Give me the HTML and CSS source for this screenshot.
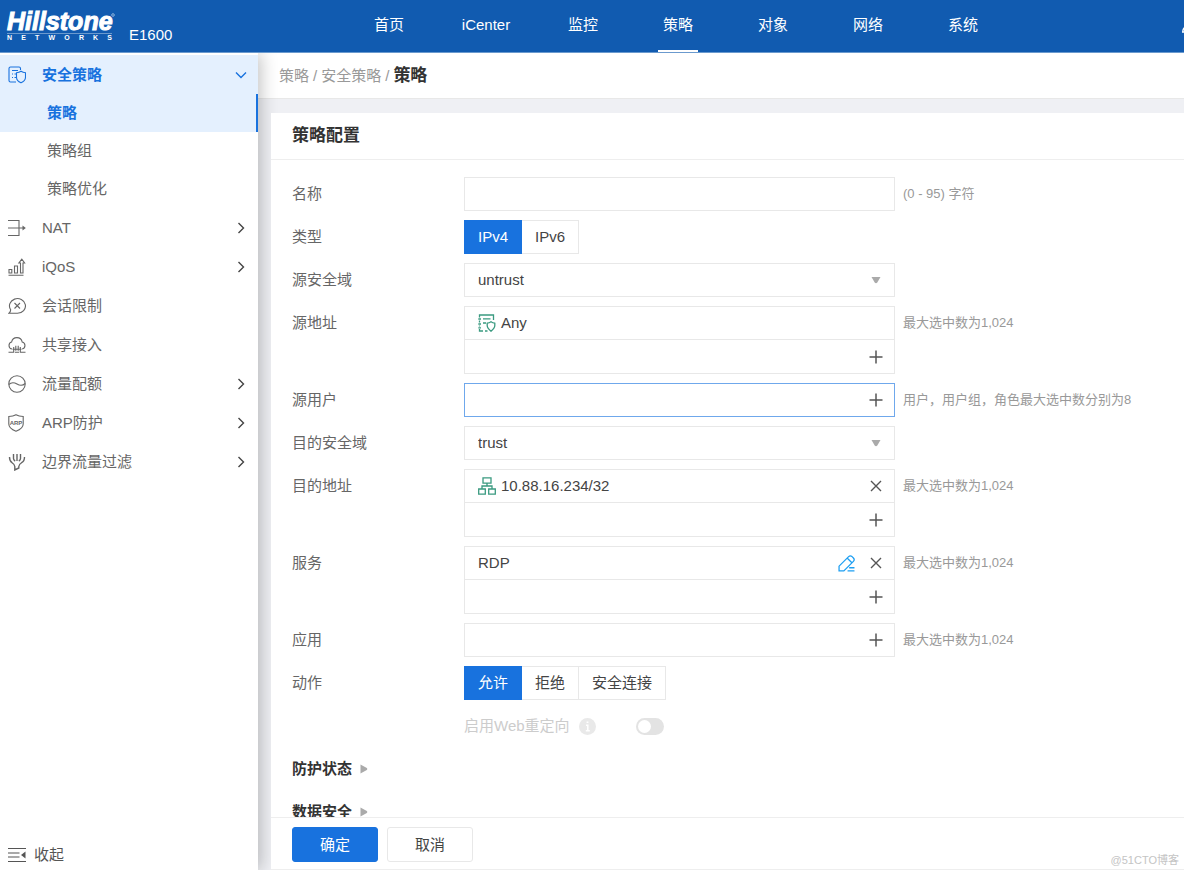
FILE: index.html
```html
<!DOCTYPE html>
<html lang="zh-CN">
<head>
<meta charset="utf-8">
<meta name="viewport" content="width=device-width, initial-scale=1">
<title>策略配置</title>
<link rel="stylesheet" href="styles.css">
</head>
<body>
<svg class="sprite" aria-hidden="true">
  <symbol id="i-plus" viewBox="0 0 14 14"><path d="M7 .5v13M.5 7h13" fill="none" stroke="currentColor" stroke-width="1.5"/></symbol>
  <symbol id="i-close" viewBox="0 0 14 14"><path d="M2 2l10 10M12 2L2 12" fill="none" stroke="currentColor" stroke-width="1.4"/></symbol>
  <symbol id="i-right" viewBox="0 0 12 12"><path d="M3.500 1l5 5-5 5" fill="none" stroke="currentColor" stroke-width="1.4"/></symbol>
  <symbol id="i-down" viewBox="0 0 12 12"><path d="M1 3.500l5 5 5-5" fill="none" stroke="currentColor" stroke-width="1.4"/></symbol>
</svg>
<header class="topbar">
  <div class="brand">
    <div class="logo">
      <span class="logo-name">Hillstone</span>
      <span class="logo-sub">N E T W O R K S</span>
      <svg class="logo-reg" viewBox="0 0 4 4" aria-hidden="true"><circle cx="2" cy="2" r="1.300" fill="none" stroke="#a9c5e6" stroke-width=".8"/></svg>
    </div>
    <span class="model">E1600</span>
  </div>
  <nav class="nav">
    <a href="#">首页</a>
    <a href="#" class="wide">iCenter</a>
    <a href="#">监控</a>
    <a href="#" class="current">策略</a>
    <a href="#">对象</a>
    <a href="#">网络</a>
    <a href="#">系统</a>
  </nav>
  <svg class="user" viewBox="0 0 16 16" aria-hidden="true"><circle cx="8" cy="4" r="3.500" fill="none" stroke="#fff" stroke-width="1.400"/><path d="M.7 14c.2-4 3-6 7.300-6s7 2 7.300 6z" fill="none" stroke="#fff" stroke-width="1.400"/></svg>
</header>

<div class="layout">
  <aside class="sidebar">
    <nav class="menu">
      <a href="#" class="item open">
        <svg class="ico" viewBox="0 0 18 18"><path d="M8 16H2.500Q1 16 1 14.500V2.500Q1 1 2.500 1h8.500Q12.500 1 12.500 2.500V4M4 4.500h6M4 8h1M6.500 8h1.500M4 11.500h1M6.500 11.500h1.500"/><path d="M13 5.200c1.500 1 3 1.400 4.500 1.500v4.500c0 2.500-1.500 4.300-4.500 5.600-3-1.300-4.500-3.100-4.500-5.600V6.700c1.500-.1 3-.5 4.500-1.500z"/></svg>
        <span>安全策略</span><svg class="arrow"><use href="#i-down"/></svg>
      </a>
      <a href="#" class="sub current">策略</a>
      <a href="#" class="sub">策略组</a>
      <a href="#" class="sub">策略优化</a>
      <a href="#" class="item">
        <svg class="ico" viewBox="0 0 18 18"><path d="M0 1.500h11v15H0M0 9h16"/><path d="M14.500 6.500L17.800 9l-3.300 2.500z" fill="currentColor" stroke="none"/></svg>
        <span>NAT</span><svg class="arrow"><use href="#i-right"/></svg>
      </a>
      <a href="#" class="item">
        <svg class="ico" viewBox="0 0 18 18"><path d="M.5 17.300h15M1 15v-3.500h2.800V15zM6.500 15V8h3v7zM12.500 15V5h-1.600l2.900-3.800L16.600 5H15v10z"/></svg>
        <span>iQoS</span><svg class="arrow"><use href="#i-right"/></svg>
      </a>
      <a href="#" class="item">
        <svg class="ico" viewBox="0 0 18 18"><path d="M1 16.200h8.500a8 7.300 0 1 0-6.800-3.400c0 1.600-.6 2.500-1.700 3.400zM6.500 6l5.500 5.500M12 6l-5.500 5.500"/></svg>
        <span>会话限制</span>
      </a>
      <a href="#" class="item">
        <svg class="ico" viewBox="0 0 18 18"><path d="M4 13a3.600 3.600 0 0 1-.4-7 5.400 5.400 0 0 1 10.600 0 3.600 3.600 0 0 1 0 7M.5 16.300h5.200V11M7.800 9.800v5M10.200 9.800v5M12.300 11v5.300h5.200M4.500 13.300h9M7 16.300h4"/></svg>
        <span>共享接入</span>
      </a>
      <a href="#" class="item">
        <svg class="ico" viewBox="0 0 18 18"><circle cx="9" cy="9" r="8.200"/><path d="M.8 9.500C4 6.500 6.500 7.500 9 9s5 2.500 8.200-.5"/></svg>
        <span>流量配额</span><svg class="arrow"><use href="#i-right"/></svg>
      </a>
      <a href="#" class="item">
        <svg class="ico" viewBox="0 0 18 18"><path d="M8 .8c2 1.200 4.500 1.700 7.200 1.700V10c0 3-2.500 5.400-7.200 7.200C3.300 15.400.8 13 .8 10V2.500C3.500 2.500 6 2 8 .8z"/><text class="arp" x="8" y="11" text-anchor="middle">ARP</text></svg>
        <span>ARP防护</span><svg class="arrow"><use href="#i-right"/></svg>
      </a>
      <a href="#" class="item">
        <svg class="ico heavy" viewBox="0 0 18 18"><path d="M5.500 1v4.500Q5.500 7.200 7.200 8M9 1v7M12.500 1v4.500Q12.500 7.200 10.800 8M1.500 4C1.500 7.500 2 8.500 4 9.700 6 11 6.800 11.500 6.800 13.500V17l4-2V13.500c0-2 .8-2.500 2.800-3.800C16 8.500 16.500 7.500 16.500 4"/></svg>
        <span>边界流量过滤</span><svg class="arrow"><use href="#i-right"/></svg>
      </a>
    </nav>
    <button class="collapse" type="button">
      <svg class="ico" viewBox="0 0 18 18"><path d="M0 2.500h18M0 7h11.500M0 11h11.500M0 15.500h18"/><path d="M17.500 5.500v7L13 9z" fill="currentColor" stroke="none"/></svg>
      <span>收起</span>
    </button>
  </aside>

  <main class="main">
    <div class="crumbs"><a href="#">策略</a><span>/</span><a href="#">安全策略</a><span>/</span><strong>策略</strong></div>
    <section class="panel">
      <h1 class="panel-title">策略配置</h1>
      <form class="form" id="policy">
        <div class="row">
          <label for="name">名称</label>
          <input class="field" id="name" type="text">
          <span class="hint">(0 - 95) 字符</span>
        </div>
        <div class="row">
          <span class="label">类型</span>
          <div class="segment"><button type="button" class="on" aria-pressed="true">IPv4</button><button type="button">IPv6</button></div>
        </div>
        <div class="row">
          <label for="src-zone">源安全域</label>
          <div class="pick"><select class="field" id="src-zone"><option>untrust</option></select><svg viewBox="0 0 10 8"><path d="M.5 1h9L6.300 6.500Q5 8 3.700 6.500z"/></svg></div>
        </div>
        <div class="row">
          <span class="label">源地址</span>
          <div class="box">
            <div class="line">
              <svg class="green" viewBox="0 0 18 18"><path d="M1.500 3.500V1h14v5M1.500 6.500v2M1.500 11.500v1M1.500 15v2H5M7 17h2.500M.3 5h2.700M.3 10h2.700M.3 13.800h2.700M5 4.800h7.500M5 9h3"/><path d="M13 17.200c-2.500-2-3.800-3.800-3.800-5.700V9.200C10.700 9 11.900 8.500 13 7.700c1.100.8 2.300 1.300 3.800 1.500v2.300c0 1.900-1.300 3.700-3.800 5.700z"/></svg>
              <span>Any</span>
            </div>
            <div class="line"><button type="button" class="act" aria-label="添加源地址"><svg><use href="#i-plus"/></svg></button></div>
          </div>
          <span class="hint">最大选中数为1,024</span>
        </div>
        <div class="row">
          <span class="label">源用户</span>
          <div class="box active"><div class="line"><button type="button" class="act" aria-label="添加源用户"><svg><use href="#i-plus"/></svg></button></div></div>
          <span class="hint">用户，用户组，角色最大选中数分别为8</span>
        </div>
        <div class="row">
          <label for="dst-zone">目的安全域</label>
          <div class="pick"><select class="field" id="dst-zone"><option>trust</option></select><svg viewBox="0 0 10 8"><path d="M.5 1h9L6.300 6.500Q5 8 3.700 6.500z"/></svg></div>
        </div>
        <div class="row">
          <span class="label">目的地址</span>
          <div class="box">
            <div class="line">
              <svg class="green" viewBox="0 0 18 18"><path d="M5 .8h8v5.400H5zM.7 12h6.600v5.200H.7zM10.700 12h6.600v5.200h-6.600zM9 6.200V9M4 12V9h10v3"/></svg>
              <span>10.88.16.234/32</span>
              <button type="button" class="act" aria-label="删除"><svg><use href="#i-close"/></svg></button>
            </div>
            <div class="line"><button type="button" class="act" aria-label="添加目的地址"><svg><use href="#i-plus"/></svg></button></div>
          </div>
          <span class="hint">最大选中数为1,024</span>
        </div>
        <div class="row">
          <span class="label">服务</span>
          <div class="box">
            <div class="line">
              <span>RDP</span>
              <button type="button" class="act edit" aria-label="编辑"><svg viewBox="0 0 16 16"><path d="M1 15V10.500L10 1.500Q11.500 0 13.200 1.500L14.500 2.800Q16 4.500 14.500 6L5.500 15zM8.800 3l4.300 4.300M10.500 12h5M9 15h6.500"/></svg></button>
              <button type="button" class="act" aria-label="删除"><svg><use href="#i-close"/></svg></button>
            </div>
            <div class="line"><button type="button" class="act" aria-label="添加服务"><svg><use href="#i-plus"/></svg></button></div>
          </div>
          <span class="hint">最大选中数为1,024</span>
        </div>
        <div class="row">
          <span class="label">应用</span>
          <div class="box"><div class="line"><button type="button" class="act" aria-label="添加应用"><svg><use href="#i-plus"/></svg></button></div></div>
          <span class="hint">最大选中数为1,024</span>
        </div>
        <div class="row">
          <span class="label">动作</span>
          <div class="segment"><button type="button" class="on" aria-pressed="true">允许</button><button type="button">拒绝</button><button type="button">安全连接</button></div>
        </div>
        <div class="row">
          <span class="label"></span>
          <div class="redirect">
            <label for="redirect">启用Web重定向</label>
            <svg class="info" viewBox="0 0 17 17"><circle cx="8.500" cy="8.500" r="8.500" fill="#e9e9e9"/><path d="M7 7.300h1.800v5.200M6.800 12.700h4M7.600 4.300h1.800" fill="none" stroke="#fff" stroke-width="1.500"/></svg>
            <input class="switch" id="redirect" type="checkbox" disabled>
          </div>
        </div>
        <button type="button" class="fold"><span>防护状态</span><svg viewBox="0 0 8 10"><path d="M.5.500L6.800 4Q8 5 6.800 6L.5 9.500z"/></svg></button>
        <button type="button" class="fold"><span>数据安全</span><svg viewBox="0 0 8 10"><path d="M.5.500L6.800 4Q8 5 6.800 6L.5 9.500z"/></svg></button>
      </form>
      <footer class="actions">
        <button class="btn primary" type="submit" form="policy">确定</button>
        <button class="btn" type="button">取消</button>
        <span class="mark">@51CTO博客</span>
      </footer>
    </section>
  </main>
</div>
</body>
</html>
```

FILE: styles.css
```css
* { box-sizing: border-box; }

body {
  margin: 0;
  height: 100vh;
  display: flex;
  flex-direction: column;
  padding-bottom: 2px;
  overflow: hidden;
  background: #fff;
  color: #444;
  font: 15px/20px "Liberation Sans", "Noto Sans CJK SC", sans-serif;
}

button, input, select { font: inherit; color: inherit; margin: 0; }
button { background: none; border: 0; padding: 0; cursor: pointer; }
a { color: inherit; text-decoration: none; }
.sprite { display: none; }

/* Top bar */
.topbar {
  flex: none;
  height: 53px;
  display: flex;
  overflow: hidden;
  background: #115bb0;
  border-bottom: 1px solid #6b9ace;
  color: #fff;
}
.brand { flex: none; width: 369px; padding-left: 7px; display: flex; gap: 17px; }
.logo { position: relative; width: 105px; padding-top: 10px; }
.logo-name { display: block; font: italic bold 25px/23px "Liberation Sans", sans-serif; -webkit-text-stroke: 1px #fff; border-bottom: 1px solid #6b9ace; }
.logo-sub { display: block; font: bold 7px/7px "Liberation Sans", sans-serif; text-align: justify; text-align-last: justify; }
.logo-reg { position: absolute; right: -3px; top: 13px; width: 4px; height: 4px; }
.model { padding-top: 25px; }
.nav { display: flex; gap: 55px; }
.nav a { width: 40px; height: 52px; padding-bottom: 2px; display: flex; align-items: center; justify-content: center; white-space: nowrap; }
.nav .wide { width: 44px; }
.nav .current { border-bottom: 2px solid #fff; padding-bottom: 0; }
.user { flex: none; width: 16px; height: 16px; margin: 18px -14px 0 auto; }

.layout { flex: 1; min-height: 0; display: flex; overflow: hidden; }

/* Sidebar */
.sidebar {
  position: relative;
  flex: none;
  width: 258px;
  padding-top: 2px;
  display: flex;
  flex-direction: column;
  background: #fff;
  box-shadow: 3px 0 16px rgba(0, 0, 0, .24);
  color: #666;
}
.menu { flex: 1; }
.item { height: 39px; padding: 0 11px 0 8px; display: flex; align-items: center; }
.item span { flex: 1; margin-left: 16px; }
.sub { height: 38px; padding-left: 47px; display: flex; align-items: center; }
.ico { width: 18px; height: 18px; fill: none; stroke: currentColor; stroke-width: 1.1; }
.heavy { stroke-width: 1.4; }
.arrow { width: 12px; height: 12px; color: #444; }
.arp { font: bold 6px "Liberation Sans", sans-serif; fill: currentColor; stroke: none; }
.open, .sub.current { background: #e4f0fe; color: #1872de; font-weight: bold; }
.open .arrow { color: #1872de; }
.sub.current { border-right: 2px solid #1872de; }
.collapse { height: 30px; padding-left: 8px; display: flex; align-items: center; gap: 8px; color: #555; }

/* Content */
.main { flex: 1; min-width: 0; display: flex; flex-direction: column; background: #eff0f4; }
.crumbs {
  flex: none;
  height: 46px;
  padding-left: 21px;
  display: flex;
  align-items: center;
  gap: 4px;
  background: #fff;
  border-bottom: 1px solid #e8e8e8;
  color: #999;
}
.crumbs strong { font-size: 17px; color: #333; }
.panel {
  position: relative;
  z-index: 1;
  flex: 1;
  min-height: 0;
  margin: 14px 0 0 13px;
  display: flex;
  flex-direction: column;
  background: #fff;
}
.panel-title { flex: none; margin: 0; padding: 0 21px; font-size: 17px; line-height: 46px; color: #333; border-bottom: 1px solid #eee; }
.form { flex: 1; min-height: 0; overflow: hidden; padding: 17px 0 0 21px; display: flex; flex-direction: column; gap: 9px; }
.row { flex: none; display: grid; grid-template-columns: 172px minmax(0, 431px) minmax(0, 1fr); }
.row > label, .label { line-height: 34px; color: #666; }
.hint { padding-left: 8px; font-size: 13px; line-height: 34px; color: #999; white-space: nowrap; }

.field { display: block; width: 100%; height: 34px; padding: 0 13px; border: 1px solid #e8e8e8; border-radius: 0; background: #fff; appearance: none; outline: 0; }
.pick { position: relative; }
.pick svg { position: absolute; right: 14px; top: 13px; width: 10px; height: 8px; fill: #aaa; pointer-events: none; }

.box { border: 1px solid #e8e8e8; }
.box.active { border-color: #6fa8ec; }
.line { height: 32px; padding: 0 11px 0 13px; display: flex; align-items: center; gap: 5px; }
.line + .line { height: 34px; border-top: 1px solid #e8e8e8; }
.act { width: 14px; height: 14px; color: #555; }
.act svg { display: block; width: 14px; height: 14px; }
.line > .act:first-child, .line > span + .act { margin-left: auto; }
.edit { width: 17px; height: 17px; margin-right: 9px; }
.edit svg { width: 17px; height: 17px; fill: none; stroke: #1e9ff2; stroke-width: 1.2; }
.green { width: 18px; height: 18px; fill: none; stroke: #3a9a80; stroke-width: 1.3; }

.segment { display: flex; }
.segment button { height: 34px; padding: 0 13px; border: 1px solid #e8e8e8; border-left: 0; }
.segment .on { border: 1px solid #1872de; background: #1872de; color: #fff; }

.redirect { height: 34px; display: flex; align-items: center; color: #ccc; }
.info { width: 17px; height: 17px; margin: 0 40px 0 9px; }
.switch { appearance: none; width: 28px; height: 17px; padding: 2px; border-radius: 9px; background: #e3e3e3; }
.switch::before { content: ""; display: block; width: 13px; height: 13px; border-radius: 50%; background: #fff; }

.fold { flex: none; height: 34px; display: flex; align-items: center; gap: 8px; font-weight: bold; color: #333; }
.fold svg { width: 8px; height: 10px; fill: #aaa; }

.actions { position: relative; flex: none; padding: 9px 21px 7px; display: flex; gap: 9px; border: solid #eee; border-width: 1px 0; }
.btn { width: 86px; height: 35px; border: 1px solid #e8e8e8; border-radius: 3px; }
.primary { border-color: #1872de; background: #1872de; color: #fff; }
.mark { position: absolute; right: 5px; bottom: 2px; font-size: 11px; line-height: 14px; color: #c4c4c4; }
```
